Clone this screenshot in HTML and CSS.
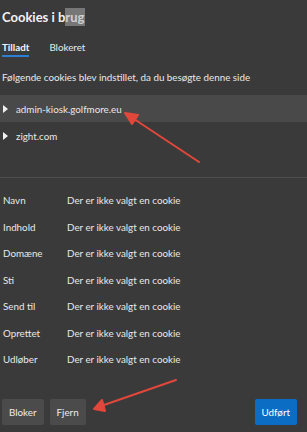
FILE: index.html
```html
<!DOCTYPE html>
<html lang="da">
<head>
    <meta charset="UTF-8">
    <title>Cookies i brug</title>
    <link rel="stylesheet" href="styles.css">
</head>
<body>
<div class="dialog">
    <h1 class="dialog__title">Cookies i b<span class="dialog__title-mark">rug</span></h1>
    <div class="tabs">
        <span class="tabs__item tabs__item--active">Tilladt</span>
        <span class="tabs__item">Blokeret</span>
    </div>
    <p class="dialog__intro">Følgende cookies blev indstillet, da du besøgte denne side</p>

    <ul class="sites">
        <li class="sites__row sites__row--selected"><span class="sites__caret"></span>admin-kiosk.golfmore.eu</li>
        <li class="sites__row"><span class="sites__caret"></span>zight.com</li>
    </ul>

    <dl class="details">
        <div class="details__row"><dt>Navn</dt><dd>Der er ikke valgt en cookie</dd></div>
        <div class="details__row"><dt>Indhold</dt><dd>Der er ikke valgt en cookie</dd></div>
        <div class="details__row"><dt>Domæne</dt><dd>Der er ikke valgt en cookie</dd></div>
        <div class="details__row"><dt>Sti</dt><dd>Der er ikke valgt en cookie</dd></div>
        <div class="details__row"><dt>Send til</dt><dd>Der er ikke valgt en cookie</dd></div>
        <div class="details__row"><dt>Oprettet</dt><dd>Der er ikke valgt en cookie</dd></div>
        <div class="details__row"><dt>Udløber</dt><dd>Der er ikke valgt en cookie</dd></div>
    </dl>

    <div class="actions">
        <button class="btn">Bloker</button>
        <button class="btn">Fjern</button>
        <button class="btn btn--primary">Udført</button>
    </div>

    <svg class="annotations" width="307" height="432" viewBox="0 0 307 432">
        <g stroke="#e2473b" stroke-width="2" stroke-linecap="round" fill="#e2473b">
            <line x1="199" y1="162" x2="131" y2="117"/>
            <polygon points="125,113 138,115 132,124" stroke-linejoin="round"/>
            <line x1="176" y1="380" x2="101" y2="406"/>
            <polygon points="94,409 102,400 105,411" stroke-linejoin="round"/>
        </g>
    </svg>
</div>
</body>
</html>
```

FILE: styles.css
```css
body {
    margin: 0;
    background: #3a3a3a;
    font-family: Lato, "Open Sans", sans-serif;
    font-size: 9.8px;
    color: #e8e8e8;
}

.dialog {
    position: relative;
    width: 307px;
    height: 432px;
    overflow: hidden;
}

.dialog__title {
    margin: 0;
    padding: 8px 0 0 2px;
    font-size: 13px;
    line-height: 18px;
    font-weight: 700;
    color: #f2f2f2;
}

.dialog__title-mark {
    display: inline-block;
    background: #777;
    color: #cfcfcf;
    padding-right: 1px;
}

.tabs {
    display: flex;
    gap: 20px;
    margin-top: 14px;
    padding-left: 2px;
}

.tabs__item {
    line-height: 14px;
    padding-bottom: 1px;
    border-bottom: 2px solid transparent;
}

.tabs__item--active {
    font-weight: 700;
    border-bottom-color: #2b7fd4;
    color: #f4f4f4;
}

.dialog__intro {
    margin: 13px 0 0;
    padding-left: 2px;
    line-height: 14px;
}

.sites {
    list-style: none;
    margin: 11px 0 0;
    padding: 0 0 28px;
    border-bottom: 1px solid #4e4e4e;
}

.sites__row {
    display: flex;
    align-items: center;
    height: 27px;
    padding-left: 3px;
}

.sites__row--selected {
    background: #494949;
}

.sites__caret {
    width: 0;
    height: 0;
    border-top: 4px solid transparent;
    border-bottom: 4px solid transparent;
    border-left: 5px solid #f0f0f0;
    margin-right: 8px;
}

.details {
    margin: 9px 0 0;
    padding-left: 3px;
}

.details__row {
    display: flex;
    align-items: center;
    height: 26.5px;
}

.details dt {
    width: 64px;
}

.details dd {
    margin: 0;
}

.actions {
    display: flex;
    gap: 6px;
    padding: 26px 10px 0 2px;
}

.btn {
    height: 26px;
    padding: 0 7px;
    border: 0;
    border-radius: 2px;
    background: #4b4b4b;
    color: #ececec;
    font-family: inherit;
    font-size: inherit;
}

.btn--primary {
    margin-left: auto;
    background: #0b6dc3;
    color: #fff;
}

.annotations {
    position: absolute;
    left: 0;
    top: 0;
    pointer-events: none;
}
```
